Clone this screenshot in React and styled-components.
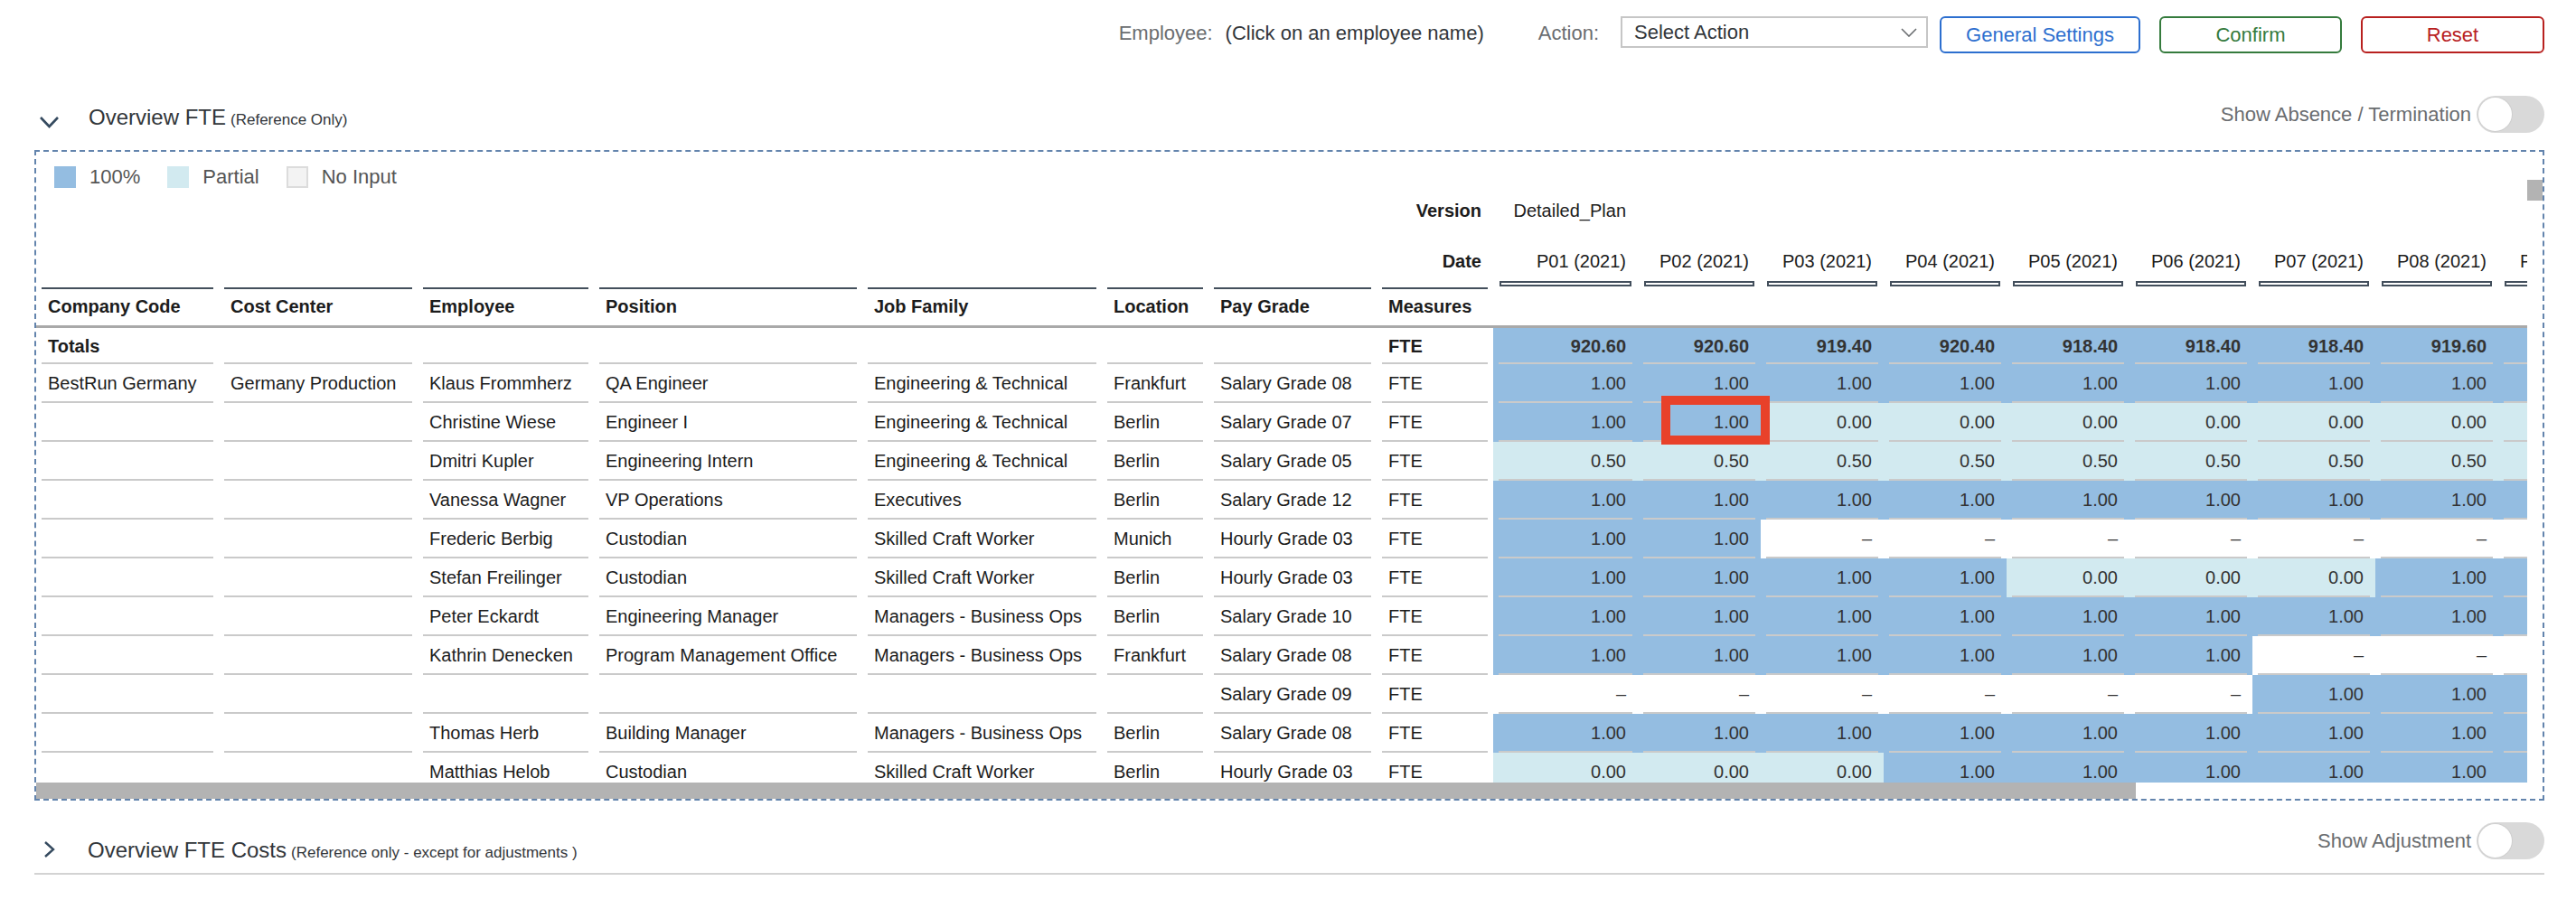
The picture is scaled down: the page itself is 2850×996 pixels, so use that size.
import React from "react";
import styled, { createGlobalStyle, css } from "styled-components";

const FONT = `"Liberation Sans", Arial, Helvetica, sans-serif`;
const DARK = "#434f5c";
const SEP = "#cacaca";
const FILL = { F: "#94bde1", P: "#d2eaf0", N: "transparent" };
const COLS = "202px 220px 195px 297px 265px 118px 186px 129px 160px repeat(9, 136px)";

const GlobalStyle = createGlobalStyle`
  html, body { margin: 0; padding: 0; background: #fff; }
  body { font-family: ${FONT}; }
`;

const Page = styled.div`
  width: 2850px;
  box-sizing: border-box;
  padding: 18px 35px 20px 38px;
  font-family: ${FONT};
  color: #32363a;
`;

/* ---------- top bar ---------- */
const TopBar = styled.div`
  display: flex;
  justify-content: flex-end;
  align-items: flex-start;
  height: 41px;
`;

const Field = styled.div`
  display: flex;
  align-items: flex-start;
  gap: ${(p) => p.$gap}px;
  margin-left: ${(p) => p.$ml || 0}px;
`;

const Label = styled.span`
  font-size: 22px;
  line-height: 38px;
  color: ${(p) => (p.$strong ? "#32363a" : "#6a6d70")};
  white-space: nowrap;
`;

const SelectBox = styled.div`
  width: 340px;
  height: 35px;
  box-sizing: border-box;
  border: 2px solid #c6c6c6;
  padding: 0 10px 0 13px;
  display: flex;
  align-items: center;
  justify-content: space-between;
  font-size: 22px;
  color: #32363a;
`;

const Buttons = styled.div`
  display: flex;
  gap: 21px;
  margin-left: 13px;
`;

const Button = styled.button`
  width: ${(p) => p.$w}px;
  height: 41px;
  box-sizing: border-box;
  padding: 0;
  background: #fff;
  border: 2px solid ${(p) => p.$c};
  border-radius: 6px;
  color: ${(p) => p.$c};
  font-family: ${FONT};
  font-size: 22px;
`;

/* ---------- section headers ---------- */
const SectionHead = styled.div`
  display: flex;
  align-items: flex-start;
  height: 41px;
  margin-top: ${(p) => p.$mt}px;
  ${(p) =>
    p.$divider &&
    css`
      padding-bottom: 15px;
      border-bottom: 2px solid #d3d3d3;
    `}
`;

const Chevron = styled.svg`
  flex-shrink: 0;
  margin-left: ${(p) => p.$ml}px;
  margin-top: ${(p) => p.$mt}px;
`;

const Title = styled.div`
  margin-left: ${(p) => p.$ml}px;
  margin-top: ${(p) => p.$mt}px;
  font-size: 24px;
  line-height: 28px;
  color: #32363a;
  white-space: nowrap;
`;

const TitleNote = styled.span`
  font-size: 17px;
  margin-left: 5px;
`;

const SwitchGroup = styled.div`
  margin-left: auto;
  display: flex;
  align-items: center;
  gap: 6px;
  height: 41px;
`;

const SwitchLabel = styled.span`
  font-size: 22px;
  color: #6a6d70;
  white-space: nowrap;
`;

const Switch = styled.div`
  width: 75px;
  height: 41px;
  box-sizing: border-box;
  padding: 2px;
  border-radius: 21px;
  background: #d9d9d9;
  display: flex;
  align-items: center;
`;

const Knob = styled.div`
  width: 37px;
  height: 37px;
  border-radius: 50%;
  background: #fff;
  box-shadow: 0 0 0 1px #cfcfcf;
`;

/* ---------- panel ---------- */
const Panel = styled.div`
  margin-top: 19px;
  border: 2px dashed #6384ad;
  display: flex;
  flex-direction: column;
`;

const PanelBody = styled.div`
  display: flex;
  height: 698px;
`;

const TableArea = styled.div`
  flex: 1;
  min-width: 0;
  overflow: hidden;
`;

const VScroll = styled.div`
  width: 17px;
  flex-shrink: 0;
`;

const VThumb = styled.div`
  margin-top: 31px;
  height: 23px;
  background: #b3b3b3;
`;

const HScroll = styled.div`
  height: 18px;
`;

const HThumb = styled.div`
  width: 2323px;
  height: 100%;
  background: #b3b3b3;
`;

const Legend = styled.div`
  display: flex;
  align-items: center;
  gap: 30px;
  height: 40px;
  box-sizing: border-box;
  padding: 16px 0 0 20px;
`;

const LegendItem = styled.div`
  display: flex;
  align-items: center;
  gap: 15px;
  font-size: 22px;
  color: #555;
`;

const Swatch = styled.span`
  width: 24px;
  height: 24px;
  box-sizing: border-box;
  background: ${(p) => p.$c};
  border: ${(p) => (p.$outlined ? "2px solid #dcdcdc" : "none")};
`;

/* ---------- table ---------- */
const Row = styled.div`
  display: grid;
  grid-template-columns: ${COLS};
  height: ${(p) => p.$h}px;
`;

const Divider = styled.div`
  height: 3px;
  background: #a9a9a9;
`;

const Cell = styled.div`
  box-sizing: border-box;
  display: flex;
  align-items: center;
  justify-content: ${(p) => (p.$right ? "flex-end" : "flex-start")};
  padding: ${(p) => p.$pt || 0}px 13px 0;
  font-size: 20px;
  font-weight: ${(p) => (p.$bold ? 700 : 400)};
  color: ${(p) => (p.$num ? "#333" : "#1c1c1c")};
  white-space: nowrap;
  background-color: ${(p) => p.$fill || "transparent"};
  ${(p) => p.$rel && css`position: relative;`}
  ${(p) =>
    p.$line &&
    css`
      background-image: linear-gradient(
        ${p.$line === "top" ? DARK : SEP},
        ${p.$line === "top" ? DARK : SEP}
      );
      background-repeat: no-repeat;
      background-size: calc(100% - 12px) 2px;
      background-position: 6px ${p.$line === "top" ? "0" : "100%"};
    `}
`;

const MarkCell = styled.div`
  padding: 0 7px;
`;

const ColumnMark = styled.div`
  height: 6px;
  box-sizing: border-box;
  border: 2px solid ${DARK};
`;

const Highlight = styled.div`
  position: absolute;
  z-index: 2;
  top: -8px;
  left: 26px;
  width: 120px;
  height: 54px;
  box-sizing: border-box;
  border: 10px solid #e8412a;
  pointer-events: none;
`;

const PERIODS = Array.from({ length: 9 }, (_, i) => `P0${i + 1} (2021)`);
const HEADERS = ["Company Code", "Cost Center", "Employee", "Position", "Job Family", "Location", "Pay Grade", "Measures"];

const mk = (types, partial = "0.00") =>
  types.split("").map((t) => ({ t, v: t === "F" ? "1.00" : t === "P" ? partial : "–" }));

const ROWS = [
  { d: ["BestRun Germany", "Germany Production", "Klaus Frommherz", "QA Engineer", "Engineering & Technical", "Frankfurt", "Salary Grade 08"], vals: mk("FFFFFFFFF") },
  { d: ["", "", "Christine Wiese", "Engineer I", "Engineering & Technical", "Berlin", "Salary Grade 07"], vals: mk("FFPPPPPPP"), hl: 1 },
  { d: ["", "", "Dmitri Kupler", "Engineering Intern", "Engineering & Technical", "Berlin", "Salary Grade 05"], vals: mk("PPPPPPPPP", "0.50") },
  { d: ["", "", "Vanessa Wagner", "VP Operations", "Executives", "Berlin", "Salary Grade 12"], vals: mk("FFFFFFFFF") },
  { d: ["", "", "Frederic Berbig", "Custodian", "Skilled Craft Worker", "Munich", "Hourly Grade 03"], vals: mk("FFNNNNNNN") },
  { d: ["", "", "Stefan Freilinger", "Custodian", "Skilled Craft Worker", "Berlin", "Hourly Grade 03"], vals: mk("FFFFPPPFF") },
  { d: ["", "", "Peter Eckardt", "Engineering Manager", "Managers - Business Ops", "Berlin", "Salary Grade 10"], vals: mk("FFFFFFFFF") },
  { d: ["", "", "Kathrin Denecken", "Program Management Office", "Managers - Business Ops", "Frankfurt", "Salary Grade 08"], vals: mk("FFFFFFNNN") },
  { d: ["", "", "", "", "", "", "Salary Grade 09"], vals: mk("NNNNNNFFF") },
  { d: ["", "", "Thomas Herb", "Building Manager", "Managers - Business Ops", "Berlin", "Salary Grade 08"], vals: mk("FFFFFFFFF") },
  { d: ["", "", "Matthias Helob", "Custodian", "Skilled Craft Worker", "Berlin", "Hourly Grade 03"], vals: mk("PPPFFFFFF") },
];

const TOTALS = ["920.60", "920.60", "919.40", "920.40", "918.40", "918.40", "918.40", "919.60", "919.60"];

const Empty = ({ n }) => Array.from({ length: n }, (_, i) => <Cell key={`e${i}`} />);

function FteTable() {
  return (
    <>
      <Row $h={50}>
        <Empty n={7} />
        <Cell $right $bold>Version</Cell>
        <Cell $right>Detailed_Plan</Cell>
        <Empty n={8} />
      </Row>
      <Row $h={53}>
        <Empty n={7} />
        <Cell $right $bold $pt={9}>Date</Cell>
        {PERIODS.map((p) => (
          <Cell key={p} $right $pt={9}>{p}</Cell>
        ))}
      </Row>
      <Row $h={7}>
        <Empty n={8} />
        {PERIODS.map((p) => (
          <MarkCell key={p}>
            <ColumnMark />
          </MarkCell>
        ))}
      </Row>
      <Row $h={42}>
        {HEADERS.map((h) => (
          <Cell key={h} $bold $line="top">{h}</Cell>
        ))}
        <Empty n={9} />
      </Row>
      <Divider />
      <Row $h={40}>
        <Cell $bold $line="bottom">Totals</Cell>
        {Array.from({ length: 6 }, (_, i) => (
          <Cell key={i} $line="bottom" />
        ))}
        <Cell $bold $line="bottom">FTE</Cell>
        {TOTALS.map((v, i) => (
          <Cell key={i} $right $bold $num $fill={FILL.F} $line="bottom">{v}</Cell>
        ))}
      </Row>
      {ROWS.map((r, ri) => (
        <Row key={ri} $h={43}>
          {r.d.map((t, i) => (
            <Cell key={i} $line="bottom">{t}</Cell>
          ))}
          <Cell $line="bottom">FTE</Cell>
          {r.vals.map((c, i) => (
            <Cell key={`v${i}`} $right $num $fill={FILL[c.t]} $line="bottom" $rel={r.hl === i}>
              {c.v}
              {r.hl === i && <Highlight />}
            </Cell>
          ))}
        </Row>
      ))}
    </>
  );
}

function Toggle({ label }) {
  return (
    <SwitchGroup>
      <SwitchLabel>{label}</SwitchLabel>
      <Switch>
        <Knob />
      </Switch>
    </SwitchGroup>
  );
}

export default function App() {
  return (
    <Page>
      <GlobalStyle />
      <TopBar>
        <Field $gap={14}>
          <Label>Employee:</Label>
          <Label $strong>(Click on an employee name)</Label>
        </Field>
        <Field $gap={24} $ml={60}>
          <Label>Action:</Label>
          <SelectBox>
            <span>Select Action</span>
            <svg width="18" height="10" viewBox="0 0 18 10">
              <path d="M1 1 L9 9 L17 1" fill="none" stroke="#6a6d70" strokeWidth="1.6" />
            </svg>
          </SelectBox>
        </Field>
        <Buttons>
          <Button $w={222} $c="#2d6fcf">General Settings</Button>
          <Button $w={202} $c="#357b3d">Confirm</Button>
          <Button $w={203} $c="#b8211f">Reset</Button>
        </Buttons>
      </TopBar>

      <SectionHead $mt={47}>
        <Chevron $ml={5} $mt={22} width="23" height="14" viewBox="0 0 23 14">
          <path d="M2 2 L11.5 12 L21 2" fill="none" stroke="#354a5f" strokeWidth="2.6" />
        </Chevron>
        <Title $ml={32} $mt={10}>
          Overview FTE<TitleNote>(Reference Only)</TitleNote>
        </Title>
        <Toggle label="Show Absence / Termination" />
      </SectionHead>

      <Panel>
        <PanelBody>
          <TableArea>
            <Legend>
              <LegendItem>
                <Swatch $c={FILL.F} />
                100%
              </LegendItem>
              <LegendItem>
                <Swatch $c={FILL.P} />
                Partial
              </LegendItem>
              <LegendItem>
                <Swatch $c="#f3f3f3" $outlined />
                No Input
              </LegendItem>
            </Legend>
            <FteTable />
          </TableArea>
          <VScroll>
            <VThumb />
          </VScroll>
        </PanelBody>
        <HScroll>
          <HThumb />
        </HScroll>
      </Panel>

      <SectionHead $mt={24} $divider>
        <Chevron $ml={10} $mt={20} width="13" height="20" viewBox="0 0 13 20">
          <path d="M2 2 L11 10 L2 18" fill="none" stroke="#354a5f" strokeWidth="2.4" />
        </Chevron>
        <Title $ml={36} $mt={17}>
          Overview FTE Costs<TitleNote>(Reference only - except for adjustments )</TitleNote>
        </Title>
        <Toggle label="Show Adjustment" />
      </SectionHead>
    </Page>
  );
}
